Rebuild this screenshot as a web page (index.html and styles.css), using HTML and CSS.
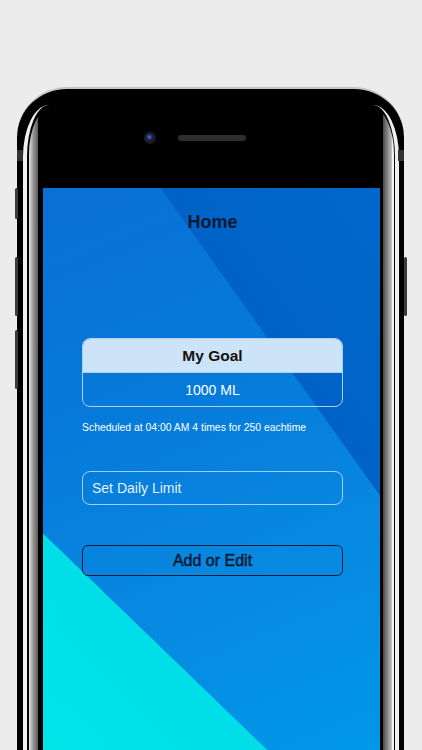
FILE: index.html
```html
<!DOCTYPE html>
<html lang="en">
<head>
<meta charset="utf-8">
<title>Home</title>
<link rel="stylesheet" href="styles.css">
</head>
<body>
<div class="phone">
  <span class="antenna antenna-left"></span>
  <span class="antenna antenna-right"></span>
  <span class="side-btn btn-mute"></span>
  <span class="side-btn btn-vol-up"></span>
  <span class="side-btn btn-vol-down"></span>
  <span class="side-btn btn-power"></span>
  <div class="rim-outer">
    <div class="rim-inner">
      <div class="bezel">
        <div class="sensors">
          <span class="camera"></span>
          <span class="speaker"></span>
          <span class="sensor-spacer"></span>
        </div>
        <div class="screen">
          <h1 class="title">Home</h1>
          <div class="goal-card">
            <div class="goal-head">My Goal</div>
            <div class="goal-body">1000 ML</div>
          </div>
          <p class="note">Scheduled at 04:00 AM 4 times for 250 eachtime</p>
          <div class="limit-field">Set Daily Limit</div>
          <div class="action-btn">Add or Edit</div>
        </div>
      </div>
    </div>
  </div>
</div>
</body>
</html>
```

FILE: styles.css
```css
html, body {
  margin: 0;
  padding: 0;
}

body {
  width: 422px;
  height: 750px;
  overflow: hidden;
  background: #ececec;
  font-family: "Liberation Sans", Arial, sans-serif;
}

.phone {
  position: relative;
  box-sizing: border-box;
  width: 387px;
  height: 663px;
  margin: 87px 0 0 17px;
  background: #000;
  border-top: 2px solid #c4c4c4;
  border-radius: 50px 50px 0 0;
  padding: 16px 5px 0 6px;
  display: flex;
  flex-direction: column;
}

.antenna {
  position: absolute;
  top: 61px;
  width: 6px;
  height: 11px;
  background: #2f3338;
}
.antenna-left { left: 0; }
.antenna-right { right: 0; }

.side-btn {
  position: absolute;
  width: 3px;
  background: #3c3c3c;
  border-radius: 1.5px;
}
.btn-mute { left: -2.5px; top: 99px; height: 31px; }
.btn-vol-up { left: -2.5px; top: 168px; height: 59px; }
.btn-vol-down { left: -2.5px; top: 241px; height: 59px; }
.btn-power { right: -2.5px; top: 168px; height: 59px; }

.rim-outer {
  flex: 1;
  display: flex;
  flex-direction: column;
  border-left: 4px solid #f0f0f0;
  border-right: 4px solid #f0f0f0;
  border-radius: 26px 26px 0 0 / 52px 52px 0 0;
  background: #000;
  padding: 3px 1px 0 2px;
}

.rim-inner {
  flex: 1;
  display: flex;
  flex-direction: column;
  border-radius: 22px 22px 0 0 / 46px 46px 0 0;
  background: linear-gradient(to right,
    #e4e4e4 0, #9a9a9a 4px, #5c5c5c 9px, #000 9px,
    #000 calc(100% - 11px), #4a4a4a calc(100% - 11px),
    #c4c4c4 calc(100% - 2px), #f4f4f4 calc(100% - 2px));
  padding: 3px 11px 0 9px;
}

.bezel {
  flex: 1;
  display: flex;
  flex-direction: column;
  background: #000;
  border-radius: 16px 16px 0 0 / 40px 40px 0 0;
  padding: 0 3px 0 5px;
}

.sensors {
  box-sizing: border-box;
  height: 77px;
  display: flex;
  justify-content: center;
  align-items: flex-start;
  gap: 22px;
  padding-top: 21px;
}

.camera {
  width: 12px;
  height: 12px;
  border-radius: 50%;
  background: radial-gradient(circle at 45% 42%, #8fa0e0 0, #3a4ea8 1px, #22307a 2.5px, #151b33 3.5px, #1e2320 4.5px, #151715 6px);
}

.speaker {
  width: 68px;
  height: 5.5px;
  margin-top: 3px;
  border-radius: 3px;
  background: #2e2e2e;
}

.sensor-spacer {
  width: 12px;
  height: 12px;
}

.screen {
  box-sizing: border-box;
  width: 337px;
  height: 562px;
  display: flex;
  flex-direction: column;
  padding: 24px 37px 0 39px;
  background:
    linear-gradient(44deg, #00e4ea 0, #00dee8 155.5px, transparent 156px),
    linear-gradient(54.5deg, transparent 421.8px, #0062c6 422.2px, #0068cc 600px),
    linear-gradient(158deg, #0a70d6 0%, #0679da 35%, #0888e0 65%, #0098e8 100%);
}

.title {
  margin: 0;
  font-size: 18px;
  line-height: 20px;
  font-weight: bold;
  text-align: center;
  color: #0b1936;
}

.goal-card {
  margin-top: 106px;
  border: 1px solid #add0f1;
  border-radius: 8px;
  overflow: hidden;
}

.goal-head {
  height: 34px;
  display: flex;
  align-items: center;
  justify-content: center;
  background: #cde3f7;
  color: #111;
  font-size: 15.5px;
  font-weight: bold;
  border-bottom: 1px solid #add0f1;
  box-sizing: border-box;
}

.goal-body {
  height: 33px;
  display: flex;
  align-items: center;
  justify-content: center;
  color: #fff;
  font-size: 14px;
}

.note {
  margin: 15px 0 0;
  font-size: 10.4px;
  line-height: 12px;
  color: #fff;
}

.limit-field {
  box-sizing: border-box;
  margin-top: 37px;
  height: 34px;
  display: flex;
  align-items: center;
  padding-left: 9px;
  border: 1.5px solid rgba(255, 255, 255, 0.62);
  border-radius: 8px;
  color: rgba(255, 255, 255, 0.92);
  font-size: 14px;
}

.action-btn {
  box-sizing: border-box;
  margin-top: 40px;
  height: 31px;
  display: flex;
  align-items: center;
  justify-content: center;
  border: 1.5px solid #0c1b38;
  border-radius: 6px;
  color: #0c1a34;
  font-size: 16px;
  -webkit-text-stroke: 0.5px #0c1a34;
}
```
